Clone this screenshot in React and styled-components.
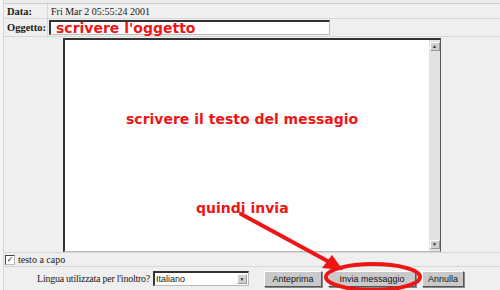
import React from "react";
import styled, { createGlobalStyle } from "styled-components";

const Global = createGlobalStyle`
  html, body { margin: 0; padding: 0; background: #f4f4f4; }
  body { font-family: "Liberation Serif", serif; color: #1a1a1a; }
`;

const Page = styled.div`
  position: relative;
  width: 500px;
  height: 290px;
  overflow: hidden;
  background: #f4f4f4;
`;

const Table = styled.div`
  display: flex;
  flex-direction: column;
  margin-left: 3px;
  border-left: 1px solid #d6d6d6;
`;

const TopStrip = styled.div`
  height: 3px;
  border-bottom: 1px solid #d0d0d0;
  background: #ececec;
`;

const Row = styled.div`
  display: flex;
  align-items: stretch;
  height: ${(p) => p.$h}px;
  border-bottom: 1px solid #d6d6d6;
  background: #efefef;
`;

const Label = styled.div`
  width: 40px;
  flex: none;
  display: flex;
  align-items: center;
  padding-left: 3px;
  font-weight: bold;
  font-size: 10.5px;
  border-right: 1px solid #d6d6d6;
`;

const Value = styled.div`
  flex: 1;
  display: flex;
  align-items: center;
  padding-left: ${(p) => p.$pad ?? 3}px;
  font-size: 10px;
`;

const SubjectInput = styled.div`
  width: 273px;
  height: 12px;
  background: #fff;
  border-top: 2px solid #333;
  border-left: 2px solid #333;
  border-right: 1px solid #bbb;
  border-bottom: 1px solid #bbb;
  display: flex;
  align-items: center;
  padding-left: 5px;
  font-family: "DejaVu Sans", sans-serif;
  font-weight: bold;
  font-size: 14px;
  color: #ee1515;
  line-height: 1;
`;

const TextCell = styled.div`
  flex: 1;
  display: flex;
  justify-content: center;
  align-items: flex-start;
  padding-top: 1px;
`;

const TextBox = styled.div`
  position: relative;
  width: 375px;
  height: 211px;
  background: #fff;
  border-top: 2px solid #333;
  border-left: 2px solid #333;
  border-right: 1px solid #555;
  border-bottom: 1px solid #bbb;
  display: flex;
  justify-content: flex-end;
`;

const ScrollTrack = styled.div`
  width: 11px;
  background: #e2e2e2;
  display: flex;
  flex-direction: column;
  justify-content: space-between;
  align-items: center;
  padding: 2px 0;
`;

const ScrollBtn = styled.div`
  width: 8px;
  height: 7px;
  background: #cfcfcf;
  border: 1px solid #999;
  border-top-color: #fff;
  border-left-color: #fff;
  display: flex;
  align-items: center;
  justify-content: center;
  font-size: 5px;
  color: #333;
  line-height: 1;
`;

const Note = styled.div`
  position: absolute;
  left: ${(p) => p.$x}px;
  top: ${(p) => p.$y}px;
  font-family: "DejaVu Sans", sans-serif;
  font-weight: bold;
  font-size: 14px;
  color: #ee1515;
  white-space: nowrap;
`;

const CheckRow = styled.div`
  flex: 1;
  display: flex;
  align-items: center;
  gap: 3px;
  padding-left: 1px;
  font-size: 10px;
`;

const Check = styled.span`
  width: 8px;
  height: 8px;
  background: #fff;
  border: 1px solid #444;
  border-right-color: #bbb;
  border-bottom-color: #bbb;
  font-size: 8px;
  font-weight: bold;
  line-height: 8px;
  display: flex;
  align-items: center;
  justify-content: center;
  font-family: "DejaVu Sans", sans-serif;
`;

const Bottom = styled.div`
  flex: 1;
  display: flex;
  align-items: center;
  justify-content: center;
  white-space: nowrap;
  font-size: 10px;
`;

const Prompt = styled.span`
  letter-spacing: -0.25px;
  flex: none;
`;

const Select = styled.div`
  flex: none;
  width: 92px;
  height: 12px;
  margin-left: 3px;
  margin-right: 12px;
  background: #fff;
  border-top: 2px solid #333;
  border-left: 2px solid #333;
  border-right: 1px solid #bbb;
  border-bottom: 1px solid #bbb;
  display: flex;
  align-items: center;
  justify-content: space-between;
  font-family: "Liberation Sans", sans-serif;
  font-size: 9px;
  padding-left: 1px;
`;

const SelectArrow = styled(ScrollBtn)`
  height: 8px;
  margin-right: 1px;
`;

const Button = styled.div`
  flex: none;
  width: ${(p) => p.$w}px;
  box-sizing: border-box;
  height: 16px;
  margin: 0 3px;
  background: #c9c9c9;
  border: 1px solid #555;
  border-top-color: #fff;
  border-left-color: #fff;
  box-shadow: 1px 1px 0 #888;
  display: flex;
  align-items: center;
  justify-content: center;
  font-family: "Liberation Sans", sans-serif;
  font-size: 9px;
  color: #111;
`;

const Overlay = styled.svg`
  position: absolute;
  left: 0;
  top: 0;
  pointer-events: none;
`;

export default function App() {
  return (
    <Page>
      <Global />
      <Table>
        <TopStrip />
        <Row $h={14}>
          <Label>Data:</Label>
          <Value>Fri Mar 2 05:55:24 2001</Value>
        </Row>
        <Row $h={17}>
          <Label>Oggetto:</Label>
          <Value $pad={1}>
            <SubjectInput>scrivere l'oggetto</SubjectInput>
          </Value>
        </Row>
        <Row $h={215}>
          <TextCell>
            <TextBox>
              <Note $x={61} $y={71}>scrivere il testo del messagio</Note>
              <Note $x={131} $y={160}>quindi invia</Note>
              <ScrollTrack>
                <ScrollBtn>▲</ScrollBtn>
                <ScrollBtn>▼</ScrollBtn>
              </ScrollTrack>
            </TextBox>
          </TextCell>
        </Row>
        <Row $h={13}>
          <CheckRow>
            <Check>✓</Check>
            testo a capo
          </CheckRow>
        </Row>
        <Row $h={23}>
          <Bottom>
            <Prompt>Lingua utilizzata per l'inoltro?</Prompt>
            <Select>
              Italiano
              <SelectArrow>▼</SelectArrow>
            </Select>
            <Button $w={58}>Anteprima</Button>
            <Button $w={88}>Invia messaggio</Button>
            <Button $w={42}>Annulla</Button>
          </Bottom>
        </Row>
      </Table>
      <Overlay width="500" height="290" viewBox="0 0 500 290">
        <line x1="241" y1="214" x2="333" y2="264" stroke="#ee1515" strokeWidth="4" strokeLinecap="round" />
        <polygon points="343,270 322,268 332,255" fill="#ee1515" />
        <ellipse cx="373" cy="277" rx="47" ry="13" fill="none" stroke="#ee1515" strokeWidth="4" />
      </Overlay>
    </Page>
  );
}
